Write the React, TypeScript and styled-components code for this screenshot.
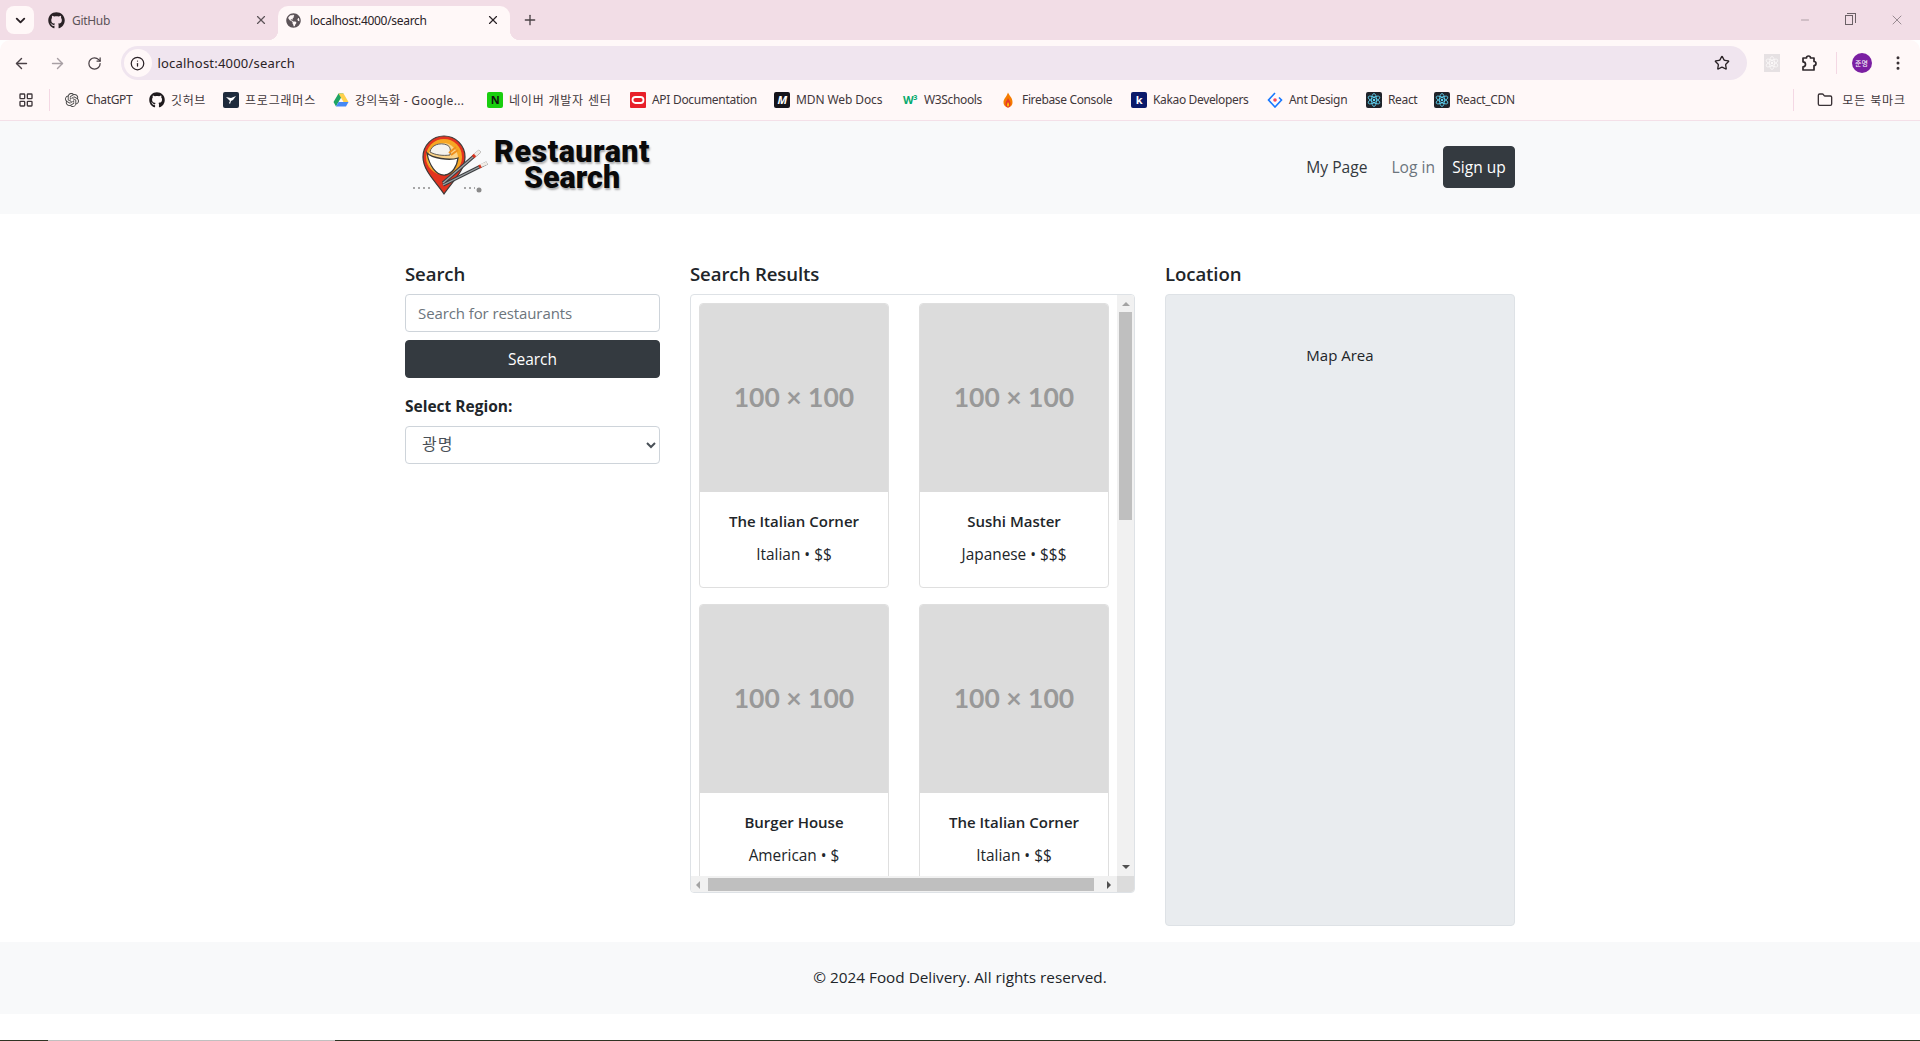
import styled, { createGlobalStyle } from 'styled-components'
import { ArrowLeft, ArrowRight, RotateCw, Info, Star, X, Plus, ChevronDown, Minus, Folder, LayoutGrid, EllipsisVertical } from 'lucide-react'
import { FaGithub, FaGlobeAmericas } from 'react-icons/fa'
import { SiOpenai } from 'react-icons/si'

const UI_FONT = '"Open Sans", "Noto Sans CJK KR", sans-serif'
const CHROME_FONT = '"Noto Sans", "Noto Sans CJK KR", sans-serif'

const GlobalStyle = createGlobalStyle`
    html, body {
        margin: 0;
        padding: 0;
        height: 1041px;
        overflow: hidden;
        background: #fff;
    }
    * {
        box-sizing: border-box;
    }
`

const Page = styled.div`
    width: 1920px;
    height: 1041px;
    overflow: hidden;
    display: flex;
    flex-direction: column;
    font-family: ${UI_FONT};
    font-size: 15px;
    color: #212529;
`

/* browser chrome */
const TabStrip = styled.div`
    height: 40px;
    flex: none;
    background: #f2dde6;
    display: flex;
    align-items: flex-end;
    padding-left: 6px;
    font-family: ${CHROME_FONT};
    font-size: 12px;
`

const TabMenu = styled.div`
    width: 28px;
    height: 28px;
    margin-bottom: 6px;
    border-radius: 8px;
    background: #fff8f8;
    display: flex;
    align-items: center;
    justify-content: center;
    color: #2a2226;
`

const Tab = styled.div<{ $active?: boolean }>`
    position: relative;
    width: ${(p) => (p.$active ? 232 : 244)}px;
    height: 34px;
    padding: ${(p) => (p.$active ? '0 10px 6px 8px' : '0 10px 6px 14px')};
    border-radius: 10px 10px 0 0;
    background: ${(p) => (p.$active ? '#fff8f8' : 'transparent')};
    color: ${(p) => (p.$active ? '#2a2226' : '#5c5358')};
    display: flex;
    align-items: center;
    gap: ${(p) => (p.$active ? 9 : 7)}px;

    ${(p) =>
        p.$active &&
        `
        &::before, &::after {
            content: '';
            position: absolute;
            bottom: 0;
            width: 10px;
            height: 10px;
        }
        &::before {
            left: -10px;
            background: radial-gradient(circle at 0 0, transparent 10px, #fff8f8 10.5px);
        }
        &::after {
            right: -10px;
            background: radial-gradient(circle at 100% 0, transparent 10px, #fff8f8 10.5px);
        }
    `}
`

const TabTitle = styled.span`
    flex: 1;
    white-space: nowrap;
    letter-spacing: -0.3px;
`

const NewTab = styled.div`
    margin: 0 0 12px 12px;
    display: flex;
    color: #4a4146;
`

const WindowControls = styled.div`
    margin: 0 15px 12px auto;
    display: flex;
    align-items: center;
    gap: 35px;
    color: #6b6166;
`

const RestoreIcon = styled.div`
    position: relative;
    width: 8px;
    height: 10px;
    left: -1px;
    border: 1px solid #6b6166;

    &::after {
        content: '';
        position: absolute;
        left: 1px;
        top: -3px;
        width: 8px;
        height: 9px;
        border-top: 1px solid #6b6166;
        border-right: 1px solid #6b6166;
    }
`

const Toolbar = styled.div`
    height: 44px;
    flex: none;
    background: #fff8f8;
    border-radius: 10px 10px 0 0;
    padding: 6px 0 4px 3px;
    display: flex;
    align-items: center;
    font-family: ${CHROME_FONT};
`

const NavButton = styled.div<{ $dim?: boolean }>`
    width: 36.5px;
    flex: none;
    display: flex;
    align-items: center;
    justify-content: center;
    color: ${(p) => (p.$dim ? '#a89fa4' : '#4a4146')};
`

const AddressBar = styled.div`
    width: 1626px;
    height: 34px;
    margin-left: 8px;
    padding: 0 17px 0 3px;
    border-radius: 17px;
    background: #f0e5ef;
    display: flex;
    align-items: center;
    font-size: 13px;
    color: #2a2226;
`

const InfoBadge = styled.div`
    width: 28px;
    height: 28px;
    border-radius: 50%;
    background: #fff8f8;
    display: flex;
    align-items: center;
    justify-content: center;
    margin-right: 6px;
`

const UrlText = styled.span`
    flex: 1;
    letter-spacing: 0.2px;
`

const ToolSlot = styled.div<{ $left: number; $width?: number }>`
    width: ${(p) => p.$width ?? 24}px;
    margin-left: ${(p) => p.$left}px;
    flex: none;
    display: flex;
    justify-content: center;
    color: #3a3236;
`

const ExtBadge = styled.div`
    width: 16px;
    height: 18px;
    background: #e6e1e3;
    display: flex;
    align-items: center;
    justify-content: center;
`

const Divider = styled.div<{ $left?: number }>`
    width: 1px;
    height: 22px;
    flex: none;
    margin-left: ${(p) => p.$left ?? 0}px;
    background: #f4d8e4;
`

const Avatar = styled.div`
    width: 20px;
    height: 20px;
    border-radius: 50%;
    background: #7b1fa2;
    color: #fff;
    font-size: 7px;
    display: flex;
    align-items: center;
    justify-content: center;
    font-family: "Noto Sans CJK KR", sans-serif;
`

const BookmarkBar = styled.div`
    height: 37px;
    flex: none;
    background: #fff8f8;
    border-bottom: 1px solid #f4e0e8;
    padding: 0 0 5px 18px;
    display: flex;
    align-items: center;
    font-family: ${CHROME_FONT};
    font-size: 12px;
    color: #3f373b;
`

const BookmarkList = styled.div`
    margin-left: 14px;
    display: flex;
    align-items: center;
    gap: 16px;
`

const Bookmark = styled.div<{ $width: number; $spacing: number }>`
    display: flex;
    align-items: center;
    gap: 6px;

    span {
        width: ${(p) => p.$width}px;
        white-space: nowrap;
        letter-spacing: ${(p) => p.$spacing}px;
    }
`

const BookmarkIcon = styled.div<{ $bg?: string; $color?: string; $italic?: boolean }>`
    width: 16px;
    height: 16px;
    flex: none;
    background: ${(p) => p.$bg ?? 'transparent'};
    color: ${(p) => p.$color ?? '#1f1a1d'};
    border-radius: 2px;
    display: flex;
    align-items: center;
    justify-content: center;
    font-size: 11px;
    font-weight: 700;
    font-style: ${(p) => (p.$italic ? 'italic' : 'normal')};
    line-height: 1;
    letter-spacing: -0.5px;
`

const AllBookmarks = styled.div`
    margin-left: auto;
    padding-right: 14px;
    display: flex;
    align-items: center;
    gap: 8px;

    span {
        letter-spacing: 0.9px;
    }
`

const FolderWrap = styled.div`
    margin-left: 15px;
    margin-right: 1px;
    display: flex;
    color: #3a3236;
`

/* site */
const SiteHeader = styled.header`
    height: 93px;
    flex: none;
    background: #f8f9fa;
`

const Container = styled.div`
    width: 1110px;
    margin: 0 auto;
`

const HeaderInner = styled(Container)`
    height: 100%;
    display: flex;
    align-items: center;
    justify-content: space-between;
`

const Logo = styled.div`
    margin: -3px 0 0 3px;
    display: flex;
    align-items: center;
    gap: 1px;
`

const LogoText = styled.div`
    font-family: Roboto, sans-serif;
    font-weight: 900;
    font-size: 30.5px;
    line-height: 26px;
    text-align: center;
    color: #0a0a0a;
    text-shadow: 1px 2px 2px rgba(0, 0, 0, 0.3);
    margin-top: -2px;
`

const LogoLine = styled.div<{ $spacing: number }>`
    letter-spacing: ${(p) => p.$spacing}px;
`

const Nav = styled.nav`
    margin-top: -1px;
    display: flex;
    align-items: center;
    font-size: 15.6px;
`

const NavLink = styled.a<{ $muted?: boolean }>`
    color: ${(p) => (p.$muted ? '#6c757d' : '#343a40')};
    margin-right: ${(p) => (p.$muted ? 8 : 24)}px;
`

const DarkButton = styled.button<{ $block?: boolean }>`
    height: ${(p) => (p.$block ? 38 : 42)}px;
    width: ${(p) => (p.$block ? '100%' : '72px')};
    border: 1px solid #343a40;
    border-radius: 4px;
    background: #343a40;
    color: #fff;
    font: inherit;
    font-size: 15.5px;
    padding: 0;
`

const Main = styled.main`
    flex: 1;
    padding-top: 49px;
`

const Columns = styled(Container)`
    display: grid;
    grid-template-columns: 255px 445px 350px;
    column-gap: 30px;
`

const Heading = styled.h5`
    margin: 0 0 7px;
    padding-bottom: 1px;
    height: 24px;
    font-size: 18.6px;
    line-height: 22px;
    font-weight: 600;
    letter-spacing: -0.1px;
`

const SearchInput = styled.input`
    display: block;
    width: 100%;
    height: 38px;
    padding: 0 12px 1px;
    margin-bottom: 8px;
    border: 1px solid #ced4da;
    border-radius: 4px;
    font: inherit;
    font-size: 15px;
    letter-spacing: -0.1px;
    outline: none;

    &::placeholder {
        color: #6c757d;
        opacity: 1;
    }
`

const FieldLabel = styled.label`
    display: block;
    margin: 16px 0 8px;
    font-size: 15.5px;
    line-height: 24px;
    font-weight: 700;
`

const RegionSelect = styled.select`
    display: block;
    width: 100%;
    height: 38px;
    padding: 0 12px 2px;
    border: 1px solid #ced4da;
    border-radius: 4px;
    background: #fff;
    color: #495057;
    font: inherit;
    font-size: 16px;
    letter-spacing: 1px;
`

const ResultsBox = styled.div`
    height: 599px;
    border: 1px solid #dee2e6;
    border-radius: 4px;
    overflow: hidden;
    display: grid;
    grid-template-columns: minmax(0, 1fr) 17px;
    grid-template-rows: minmax(0, 1fr) 16px;
`

const ResultsViewport = styled.div`
    overflow: hidden;
    padding: 8px;
    display: grid;
    grid-template-columns: 190px 190px;
    grid-auto-rows: 285px;
    column-gap: 30px;
    row-gap: 16px;
`

const Card = styled.div`
    border: 1px solid #dfdfdf;
    border-radius: 4px;
    overflow: hidden;
    text-align: center;
`

const Placeholder = styled.div`
    height: 189px;
    margin: -1px -1px 0;
    padding-bottom: 1px;
    background: #dcdcdc;
    color: #999;
    font-family: Lato, sans-serif;
    font-size: 26.5px;
    font-weight: 700;
    display: flex;
    align-items: center;
    justify-content: center;
`

const CardTitle = styled.div`
    margin-top: 17px;
    font-size: 15px;
    line-height: 24px;
    font-weight: 600;
`

const CardMeta = styled.div`
    margin-top: 10px;
    font-size: 15.4px;
    line-height: 24px;
`

const ScrollTrackV = styled.div`
    background: #f1f1f1;
    padding: 7px 2px 0;
    display: flex;
    flex-direction: column;
    align-items: center;
`

const ScrollTrackH = styled.div`
    background: #f1f1f1;
    padding: 2px 0 1px;
    display: flex;
    align-items: stretch;
`

const ScrollCorner = styled.div`
    background: #dcdcdc;
`

const Arrow = styled.div<{ $dir: 'up' | 'down' | 'left' | 'right'; $dark?: boolean }>`
    width: 0;
    height: 0;
    flex: none;
    border: 4px solid transparent;
    border-${(p) => ({ up: 'bottom', down: 'top', left: 'right', right: 'left' })[p.$dir]}-color: ${(p) => (p.$dark ? '#505050' : '#a3a3a3')};
    border-${(p) => ({ up: 'top', down: 'bottom', left: 'left', right: 'right' })[p.$dir]}-width: 0;
`

const ThumbV = styled.div`
    width: 13px;
    height: 208px;
    margin-top: 6px;
    flex: none;
    background: #bfbfbf;
`

const ArrowDownSlot = styled.div`
    margin-top: auto;
    padding-bottom: 7px;
`

const ThumbH = styled.div`
    width: 386px;
    flex: none;
    margin-left: 8px;
    background: #bfbfbf;
`

const ArrowSlotH = styled.div<{ $left: number }>`
    display: flex;
    align-items: center;
    margin-left: ${(p) => p.$left}px;
`

const MapPanel = styled.div`
    height: 632px;
    padding-top: 48px;
    border: 1px solid #dee2e6;
    border-radius: 4px;
    background: #e9ecef;
    text-align: center;
    line-height: 24px;
`

const Footer = styled.footer`
    height: 72px;
    flex: none;
    padding-bottom: 2px;
    background: #f8f9fa;
    display: flex;
    align-items: center;
    justify-content: center;
    font-size: 15.3px;
`

const BottomGap = styled.div`
    height: 26px;
    flex: none;
`

const BottomLine = styled.div`
    height: 1px;
    flex: none;
    display: flex;
    background: #2f3424;
`

const BottomLineGap = styled.div`
    width: 287px;
    margin-left: 48px;
    background: #c0c0c0;
`

const LogoMark = () => (
    <svg width="85" height="66" viewBox="0 0 85 66">
        <path d="M36 3a21 21 0 0 1 21 21c0 14-14 26-21 37-7-11-21-23-21-37A21 21 0 0 1 36 3z" fill="#e2331f" stroke="#3d3a38" strokeWidth="1.2" />
        <circle cx="36" cy="24" r="18" fill="#f6a623" />
        <circle cx="35" cy="25" r="15" fill="#fbd48a" />
        <path d="M19 20c5 5 22 8 31 5-1 9-6 16-13 17-9 1-16-10-18-22z" fill="#fff" stroke="#3d3a38" strokeWidth="1.3" />
        <path d="M22 19c1-7 10-10 17-7 3 1 4 5 3 10-7 1-15 0-20-3z" fill="#f4f2ee" stroke="#3d3a38" strokeWidth="0.8" />
        <path d="M41 20l7-6M43 22l7-5" stroke="#ef8f1d" strokeWidth="2" />
        <path d="M35 50L72 18M35 52L79 30" stroke="#3d3f42" strokeWidth="3.6" />
        <path d="M35 50L72 18M35 52L79 30" stroke="#9da3a6" strokeWidth="1.2" />
        <path d="M66 23l6-5M72 33l7-3" stroke="#f0ece6" strokeWidth="3.4" />
        <path d="M65 24l2-2M71 34l2-1" stroke="#d8351f" strokeWidth="3.4" />
        <path d="M5 55h17M56 55h11" stroke="#555" strokeWidth="1" strokeDasharray="2 3" />
        <circle cx="71" cy="57" r="2.500" fill="#8a8a8a" />
    </svg>
)

const ReactGlyph = ({ faded }: { faded?: boolean }) => (
    <svg width="16" height="16" viewBox="0 0 16 16">
        {!faded && <rect width="16" height="16" rx="2" fill="#20232a" />}
        <g fill="none" stroke={faded ? '#fbf8f8' : '#61dafb'} strokeWidth="0.8">
            <ellipse cx="8" cy="8" rx="6.500" ry="2.500" transform="rotate(90 8 8)" />
            <ellipse cx="8" cy="8" rx="6.500" ry="2.500" transform="rotate(30 8 8)" />
            <ellipse cx="8" cy="8" rx="6.500" ry="2.500" transform="rotate(150 8 8)" />
        </g>
        <circle cx="8" cy="8" r="1.200" fill={faded ? '#fbf8f8' : '#61dafb'} />
    </svg>
)

const DriveGlyph = () => (
    <svg width="16" height="16" viewBox="0 0 16 16">
        <path d="M5.500 1.500h5L5.500 10 3 14.500 0.500 10z" fill="#1fa463" />
        <path d="M5.500 1.500h5l5 8.500h-5z" fill="#ffd04b" />
        <path d="M5.500 10h10L13 14.500H3z" fill="#4688f4" />
    </svg>
)

const AntGlyph = () => (
    <svg width="16" height="16" viewBox="0 0 16 16">
        <path d="M8 1L1.500 8 8 15l6.500-7L12 5.500" fill="none" stroke="#1677ff" strokeWidth="1.600" />
        <circle cx="8" cy="8" r="1.800" fill="#f5465c" />
    </svg>
)

const ProgrammersGlyph = () => (
    <svg width="16" height="16" viewBox="0 0 16 16">
        <rect width="16" height="16" rx="2" fill="#1e2a3c" />
        <path d="M3 5l5 1 5-2-3 4-2 1-1 3-1-1 1-2z" fill="#fff" />
    </svg>
)

const ApiGlyph = () => (
    <svg width="16" height="16" viewBox="0 0 16 16">
        <rect width="16" height="16" rx="1" fill="#e8202a" />
        <rect x="2.500" y="5" width="11" height="6" rx="3" fill="none" stroke="#fff" strokeWidth="1.800" />
    </svg>
)

const FirebaseGlyph = () => (
    <svg width="16" height="16" viewBox="0 0 16 16">
        <path d="M8 0.500c1 3 4.500 5 4.500 9.500A4.500 5 0 0 1 8 15.500 4.500 5 0 0 1 3.500 10C3.500 7 6.500 5 8 0.500z" fill="#f57c00" />
        <path d="M8 6c.5 2 2.500 3 2.500 5.500A2.500 3.500 0 0 1 8 15.500a2.500 3.500 0 0 1-2.500-4C5.500 9.500 7.500 8 8 6z" fill="#e5392a" />
        <path d="M8 10c.5 1 1 1.500 1 3a1 1.500 0 0 1-2 0c0-1 .5-2 1-3z" fill="#ffc400" />
    </svg>
)

const ExtensionGlyph = () => (
    <svg width="20" height="20" viewBox="0 0 20 20" fill="none" stroke="#2f282c" strokeWidth="1.700" strokeLinejoin="round">
        <path d="M5 5h3.500a2 2 0 0 1 4 0H16v3.500a2 2 0 0 1 0 4V17H5v-3.200a2.500 2.500 0 0 0 0-5z" />
    </svg>
)

const bookmarks = [
    { label: 'ChatGPT', width: 47, spacing: -0.35, icon: <BookmarkIcon><SiOpenai size={14} color="#444" /></BookmarkIcon> },
    { label: '깃허브', width: 36, spacing: 0.6, icon: <BookmarkIcon><FaGithub size={16} /></BookmarkIcon> },
    { label: '프로그래머스', width: 72, spacing: 0.8, icon: <ProgrammersGlyph /> },
    { label: '강의녹화 - Google...', width: 116, spacing: 0.3, icon: <DriveGlyph /> },
    { label: '네이버 개발자 센터', width: 105, spacing: 0.8, icon: <BookmarkIcon $bg="#19ce0f" $color="#111">N</BookmarkIcon> },
    { label: 'API Documentation', width: 106, spacing: -0.3, icon: <ApiGlyph /> },
    { label: 'MDN Web Docs', width: 90, spacing: -0.1, icon: <BookmarkIcon $bg="#15141a" $color="#fff" $italic>M</BookmarkIcon> },
    { label: 'W3Schools', width: 60, spacing: -0.35, icon: <BookmarkIcon $color="#04aa6d">W³</BookmarkIcon> },
    { label: 'Firebase Console', width: 93, spacing: -0.35, icon: <FirebaseGlyph /> },
    { label: 'Kakao Developers', width: 98, spacing: -0.35, icon: <BookmarkIcon $bg="#0a1a6b" $color="#fff">k</BookmarkIcon> },
    { label: 'Ant Design', width: 61, spacing: -0.35, icon: <AntGlyph /> },
    { label: 'React', width: 30, spacing: -0.35, icon: <ReactGlyph /> },
    { label: 'React_CDN', width: 60, spacing: -0.35, icon: <ReactGlyph /> },
]

const results = [
    { name: 'The Italian Corner', meta: 'Italian • $$' },
    { name: 'Sushi Master', meta: 'Japanese • $$$' },
    { name: 'Burger House', meta: 'American • $' },
    { name: 'The Italian Corner', meta: 'Italian • $$' },
]

const App = () => {
    return (
        <Page>
            <GlobalStyle />
            <TabStrip>
                <TabMenu><ChevronDown size={15} strokeWidth={3} /></TabMenu>
                <Tab>
                    <FaGithub size={17} color="#2a2226" />
                    <TabTitle>GitHub</TabTitle>
                    <X size={14} />
                </Tab>
                <Tab $active>
                    <FaGlobeAmericas size={15} color="#5c5358" />
                    <TabTitle>localhost:4000/search</TabTitle>
                    <X size={14} color="#2a2226" />
                </Tab>
                <NewTab><Plus size={16} /></NewTab>
                <WindowControls>
                    <Minus size={12} strokeWidth={1} />
                    <RestoreIcon />
                    <X size={16} strokeWidth={1} />
                </WindowControls>
            </TabStrip>
            <Toolbar>
                <NavButton><ArrowLeft size={17} /></NavButton>
                <NavButton $dim><ArrowRight size={17} /></NavButton>
                <NavButton><RotateCw size={15} /></NavButton>
                <AddressBar>
                    <InfoBadge><Info size={15} /></InfoBadge>
                    <UrlText>localhost:4000/search</UrlText>
                    <Star size={16} />
                </AddressBar>
                <ToolSlot $left={13}><ExtBadge><ReactGlyph faded /></ExtBadge></ToolSlot>
                <ToolSlot $left={12}><ExtensionGlyph /></ToolSlot>
                <ToolSlot $left={16} $width={1}><Divider /></ToolSlot>
                <ToolSlot $left={15} $width={20}><Avatar>준명</Avatar></ToolSlot>
                <ToolSlot $left={14} $width={24}><EllipsisVertical size={18} /></ToolSlot>
            </Toolbar>
            <BookmarkBar>
                <LayoutGrid size={16} />
                <Divider $left={15} />
                <BookmarkList>
                    {bookmarks.map((item) => (
                        <Bookmark key={item.label} $width={item.width} $spacing={item.spacing}>
                            {item.icon}
                            <span>{item.label}</span>
                        </Bookmark>
                    ))}
                </BookmarkList>
                <AllBookmarks>
                    <Divider />
                    <FolderWrap><Folder size={16} /></FolderWrap>
                    <span>모든 북마크</span>
                </AllBookmarks>
            </BookmarkBar>

            <SiteHeader>
                <HeaderInner>
                    <Logo>
                        <LogoMark />
                        <LogoText>
                            <LogoLine $spacing={0.5}>Restaurant</LogoLine>
                            <LogoLine $spacing={0}>Search</LogoLine>
                        </LogoText>
                    </Logo>
                    <Nav>
                        <NavLink>My Page</NavLink>
                        <NavLink $muted>Log in</NavLink>
                        <DarkButton>Sign up</DarkButton>
                    </Nav>
                </HeaderInner>
            </SiteHeader>

            <Main>
                <Columns>
                    <section>
                        <Heading>Search</Heading>
                        <SearchInput placeholder="Search for restaurants" />
                        <DarkButton $block>Search</DarkButton>
                        <FieldLabel>Select Region:</FieldLabel>
                        <RegionSelect defaultValue="광명">
                            <option>광명</option>
                        </RegionSelect>
                    </section>
                    <section>
                        <Heading>Search Results</Heading>
                        <ResultsBox>
                            <ResultsViewport>
                                {results.map((item, index) => (
                                    <Card key={index}>
                                        <Placeholder>100 × 100</Placeholder>
                                        <CardTitle>{item.name}</CardTitle>
                                        <CardMeta>{item.meta}</CardMeta>
                                    </Card>
                                ))}
                            </ResultsViewport>
                            <ScrollTrackV>
                                <Arrow $dir="up" />
                                <ThumbV />
                                <ArrowDownSlot><Arrow $dir="down" $dark /></ArrowDownSlot>
                            </ScrollTrackV>
                            <ScrollTrackH>
                                <ArrowSlotH $left={5}><Arrow $dir="left" /></ArrowSlotH>
                                <ThumbH />
                                <ArrowSlotH $left={13}><Arrow $dir="right" $dark /></ArrowSlotH>
                            </ScrollTrackH>
                            <ScrollCorner />
                        </ResultsBox>
                    </section>
                    <section>
                        <Heading>Location</Heading>
                        <MapPanel>Map Area</MapPanel>
                    </section>
                </Columns>
            </Main>

            <Footer>© 2024 Food Delivery. All rights reserved.</Footer>
            <BottomGap />
            <BottomLine><BottomLineGap /></BottomLine>
        </Page>
    )
}

export default App
